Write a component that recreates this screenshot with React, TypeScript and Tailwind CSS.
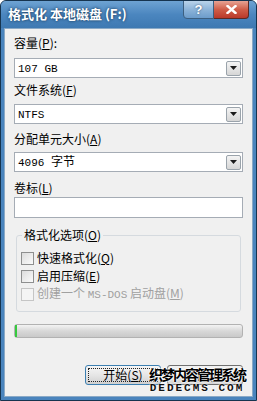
import React from "react";

const cjk = "font-['SimSun','Noto_Sans_CJK_SC',sans-serif]";
const mono = "font-['Liberation_Mono','Noto_Sans_CJK_SC',monospace]";

function Mn({ c }: { c: string }) {
  return (
    <span>
      (<span className="underline underline-offset-1">{c}</span>)
    </span>
  );
}

function Arrow() {
  return (
    <div className="w-[15px] h-[15px] mr-[1px] border border-[#9aa3ab] rounded-[2px] bg-gradient-to-b from-[#f4f4f4] to-[#d6d6d6] flex items-center justify-center">
      <svg width="7" height="4" viewBox="0 0 7 4">
        <path d="M0 0H7L3.5 4Z" fill="#1b1b1b" />
      </svg>
    </div>
  );
}

function Combo({ text, cls }: { text: React.ReactNode; cls: string }) {
  return (
    <div className={`h-[20px] border border-[#a5acb5] bg-white flex items-center justify-between pl-[3px] ${cls}`}>
      <span className="text-[12px] leading-[14px] text-black">{text}</span>
      <Arrow />
    </div>
  );
}

function Check({ label, disabled, cls }: { label: React.ReactNode; disabled?: boolean; cls: string }) {
  return (
    <div className={`flex items-center h-[14px] ${cls}`}>
      <div
        className={`w-[13px] h-[13px] border ${
          disabled ? "border-[#c5c5c5] bg-[#f4f4f4]" : "border-[#8e8f8f] bg-gradient-to-br from-[#dcdcdc] to-[#fbfbfb]"
        }`}
      />
      <span className={`ml-[3px] text-[12px] leading-[14px] ${disabled ? "text-[#a0a0a0]" : "text-black"}`}>{label}</span>
    </div>
  );
}

export default function App() {
  return (
    <div className={`w-[257px] h-[401px] bg-[#4a84bd] border border-[#16344f] rounded-t-[6px] flex flex-col overflow-hidden ${cjk}`}>
      {/* title bar */}
      <div className="relative h-[27px] shrink-0 bg-gradient-to-b from-[#6ea3d3] via-[#4b86bf] to-[#3e79b2] flex items-center pl-[7px]">
        <span className="text-white font-bold text-[13px] leading-[14px] mt-[-2px] [text-shadow:0_0_3px_#0d2a45]">
          格式化 本地磁盘 (F:)
        </span>
        <div className="absolute right-[7px] top-[-1px] flex">
          <div className="w-[31px] h-[19px] border border-[#3c5f80] rounded-bl-[4px] bg-gradient-to-b from-[#b9d3ea] via-[#8db4d9] to-[#6c9ccb] flex items-center justify-center">
            <span className="text-white font-bold text-[13px] leading-none [text-shadow:0_0_2px_#2d4d6d] font-['Liberation_Sans',sans-serif]">?</span>
          </div>
          <div className="w-[35px] h-[19px] border border-l-0 border-[#5b2a25] rounded-br-[4px] bg-gradient-to-b from-[#e6a394] via-[#cf5d48] to-[#b9382a] flex items-center justify-center">
            <svg width="11" height="9" viewBox="0 0 11 9">
              <path d="M1.5 1L9.5 8M9.5 1L1.5 8" stroke="#fff" strokeWidth="2.4" strokeLinecap="square" />
            </svg>
          </div>
        </div>
      </div>
      {/* client area */}
      <div className="relative mx-[3px] mb-[3px] flex-1 bg-[#f0f0f0] border border-[#8aa9c6] flex flex-col px-[9px]">
        <div className="mt-[7px] text-[12px] leading-[14px] text-black">
          容量<Mn c="P" />:
        </div>
        <Combo cls="mt-[8px]" text={<span className={`${mono} text-[11px]`}>107 GB</span>} />
        <div className="mt-[5px] text-[12px] leading-[14px] text-black">
          文件系统<Mn c="F" />
        </div>
        <Combo cls="mt-[7px]" text={<span className={`${mono} text-[11px]`}>NTFS</span>} />
        <div className="mt-[8px] text-[12px] leading-[14px] text-black">
          分配单元大小<Mn c="A" />
        </div>
        <Combo
          cls="mt-[6px]"
          text={
            <span>
              <span className={`${mono} text-[11px]`}>4096 </span>字节
            </span>
          }
        />
        <div className="mt-[9px] text-[12px] leading-[14px] text-black">
          卷标<Mn c="L" />
        </div>
        <div className="mt-[2px] h-[21px] border border-[#a5acb5] bg-white" />
        <fieldset className="mt-[10px] mx-[2px] h-[84px] border border-[#d5dadf] rounded-[3px] px-[4px] pb-[0px] flex flex-col">
          <legend className="ml-[1px] px-[2px] text-[12px] leading-[14px] text-black">
            格式化选项<Mn c="O" />
          </legend>
          <Check cls="mt-[9px]" label={<span>快速格式化<Mn c="Q" /></span>} />
          <Check cls="mt-[4px]" label={<span>启用压缩<Mn c="E" /></span>} />
          <Check
            cls="mt-[4px]"
            disabled
            label={
              <span>
                创建一个 <span className={`${mono} text-[11px]`}>MS-DOS</span> 启动盘<Mn c="M" />
              </span>
            }
          />
        </fieldset>
        <div className="mt-[12px] h-[14px] border border-[#b2b2b2] rounded-[3px] bg-gradient-to-b from-[#f3f3f3] via-[#d8d8d8] to-[#c9c9c9] flex">
          <div className="w-[2px] h-full bg-[#37c93f]" />
        </div>
        <div className="mt-[27px] flex justify-end gap-[6px]">
          <div className="w-[76px] h-[20px] border border-[#3c7fb1] rounded-[3px] bg-gradient-to-b from-[#f6f6f6] via-[#e6e6e6] to-[#d0d0d0] p-[2px]">
            <div className="w-full h-full border border-dotted border-[#222] flex items-center justify-center text-[12px] leading-[14px] text-black">
              开始<Mn c="S" />
            </div>
          </div>
          <div className="w-[76px] h-[20px] border border-[#707070] rounded-[3px] bg-gradient-to-b from-[#f2f2f2] to-[#d4d4d4] flex items-center justify-center text-[12px] leading-[14px] text-black">
            关闭<Mn c="C" />
          </div>
        </div>
        {/* watermark */}
        <div className="absolute left-[142px] top-[337px] w-[100px] flex flex-col items-center pointer-events-none">
          <span className="text-[14px] leading-[16px] font-bold text-black tracking-[-2px] whitespace-nowrap [text-shadow:0_0_2px_#fff,0_0_2px_#fff,0_0_2px_#fff]">
            织梦内容管理系统
          </span>
          <span className="text-[11px] leading-[12px] font-bold text-[#111] tracking-[2px] whitespace-nowrap font-['Liberation_Mono',monospace] [text-shadow:0_0_2px_#fff,0_0_2px_#fff]">
            DEDECMS.COM
          </span>
        </div>
      </div>
    </div>
  );
}
